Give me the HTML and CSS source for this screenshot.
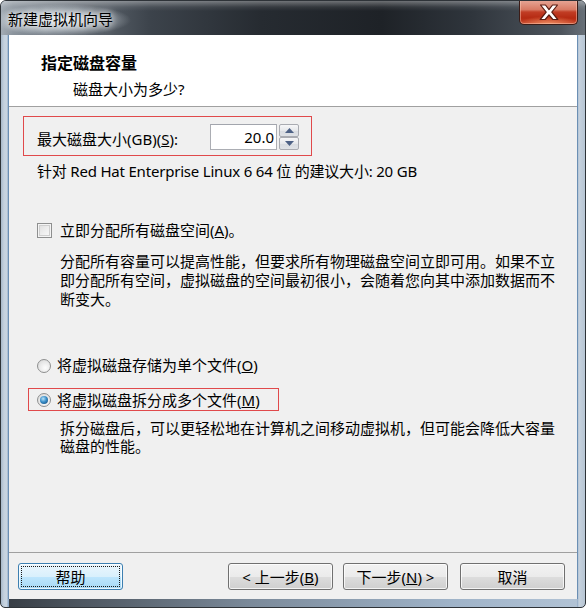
FILE: index.html
```html
<!DOCTYPE html>
<html lang="zh-CN">
<head>
<meta charset="utf-8">
<title>新建虚拟机向导</title>
<link rel="stylesheet" href="styles.css">
</head>
<body>
<div class="window">
  <div class="titlebar">
    <span class="title">新建虚拟机向导</span>
    <div class="close">
      <svg width="59" height="25" viewBox="0 0 59 25">
        <path d="M21.5 5 L26.5 5 L30 9.6 L33.5 5 L38.5 5 L32.8 12.2 L38.8 19.5 L33.8 19.5 L30 14.8 L26.2 19.5 L21.2 19.5 L27.2 12.2 Z" fill="#fff" stroke="#5a1d12" stroke-width="1.2" stroke-linejoin="round"/>
      </svg>
    </div>
  </div>
  <div class="client">
    <div class="header">
      <div class="h-title">指定磁盘容量</div>
      <div class="h-sub">磁盘大小为多少?</div>
    </div>
    <div class="content">
      <div class="size-box">
        <span class="label">最大磁盘大小(GB)(<u>S</u>):</span>
        <div class="spin">
          <div class="spin-input">20.0</div>
          <div class="spin-btns">
            <div class="spin-btn"><svg width="9" height="5" viewBox="0 0 9 5"><path d="M0 5 L4.5 0 L9 5 Z" fill="#4d6185"/></svg></div>
            <div class="spin-btn"><svg width="9" height="5" viewBox="0 0 9 5"><path d="M0 0 L4.5 5 L9 0 Z" fill="#4d6185"/></svg></div>
          </div>
        </div>
      </div>
      <div class="recommend">针对 Red Hat Enterprise Linux 6 64 位 的建议大小: 20 GB</div>
      <div class="check-row"><span class="checkbox"></span><span>立即分配所有磁盘空间(<u>A</u>)。</span></div>
      <p class="desc d1">分配所有容量可以提高性能，但要求所有物理磁盘空间立即可用。如果不立即分配所有空间，虚拟磁盘的空间最初很小，会随着您向其中添加数据而不断变大。</p>
      <div class="radio-row r1"><span class="radio"></span><span>将虚拟磁盘存储为单个文件(<u>O</u>)</span></div>
      <div class="radio-row r2"><span class="radio checked"></span><span>将虚拟磁盘拆分成多个文件(<u>M</u>)</span></div>
      <p class="desc d2">拆分磁盘后，可以更轻松地在计算机之间移动虚拟机，但可能会降低大容量磁盘的性能。</p>
    </div>
    <div class="footer">
      <button class="btn focus help"><span>帮助</span></button>
      <div class="nav">
        <button class="btn">&lt; 上一步(<u>B</u>)</button>
        <button class="btn next">下一步(<u>N</u>) &gt;</button>
        <button class="btn cancel">取消</button>
      </div>
    </div>
  </div>
</div>
</body>
</html>
```

FILE: styles.css
```css
html, body {
  margin: 0;
  padding: 0;
  background: #ffffff;
}

body {
  font-family: "Noto Sans", "Noto Sans CJK SC", sans-serif;
  font-size: 15px;
  color: #000;
}

.window {
  width: 586px;
  height: 608px;
  box-sizing: border-box;
  display: flex;
  flex-direction: column;
  border: 1px solid #2e3338;
  border-radius: 6px 6px 5px 5px;
  overflow: hidden;
  background:
    linear-gradient(to right, #a7b8c9 0, #c4d1de 3px, #c9d5e1 6px, #8ea8c4 7px) left top / 8px 100% no-repeat,
    linear-gradient(to right, #8ea8c4 0, #c6d2de 2px, #b9c7d5 7px) right top / 8px 100% no-repeat,
    linear-gradient(to right, #353b42 0, #4d5660 80px, #7b8a9a 250px, #9fb3c8 450px, #b3c4d6 586px);
}

.titlebar {
  height: 34px;
  position: relative;
  flex: none;
  background:
    linear-gradient(to bottom, rgba(255,255,255,0.35) 0, rgba(255,255,255,0.08) 6px, rgba(255,255,255,0) 10px),
    radial-gradient(ellipse 70px 16px at 60px 19px, rgba(235,240,244,0.85) 0, rgba(220,228,234,0.55) 55%, rgba(200,210,220,0) 100%),
    linear-gradient(to right, #a3acb5 0, #8a939c 12px, #6e767f 60px, #3c434b 150px, #262b31 260px, #1e2227 380px, #2f353c 470px, #4d545c 560px, #6a727a 586px);
}

.title {
  position: absolute;
  left: 7px;
  top: 8px;
  line-height: 20px;
  font-family: "Noto Sans CJK SC", sans-serif;
  font-size: 15px;
  color: #000;
  text-shadow: 0 0 6px rgba(255,255,255,0.9), 0 0 10px rgba(255,255,255,0.7);
}

.close {
  position: absolute;
  right: 7px;
  top: -1px;
  width: 59px;
  height: 25px;
  box-sizing: border-box;
  border: 1px solid #3b1c17;
  border-top: none;
  border-radius: 0 0 5px 5px;
  background:
    radial-gradient(ellipse 30px 8px at 50% 100%, rgba(255,170,120,0.7), rgba(255,140,90,0) 100%),
    linear-gradient(to bottom, #e7a898 0, #d77a64 40%, #c13d25 50%, #b52a12 75%, #c8462a 100%);
  box-shadow: inset 0 0 0 1px rgba(255,210,190,0.45);
}

.close svg {
  display: block;
  position: absolute;
  left: -1px;
  top: 0;
}

.client {
  flex: 1;
  margin: 0 7px 8px 7px;
  background: #f0f0f0;
  display: flex;
  flex-direction: column;
  border: 1px solid #6b8fb4;
  border-bottom: none;
  border-top: none;
  min-height: 0;
}

.header {
  height: 72px;
  box-sizing: border-box;
  background: #ffffff;
  border-bottom: 1px solid #a0a0a0;
  padding-top: 17px;
  flex: none;
}

.h-title {
  margin-left: 32px;
  line-height: 20px;
  font-family: "Noto Sans CJK SC", sans-serif;
  font-weight: 700;
  font-size: 16px;
}

.h-sub {
  margin-left: 64px;
  margin-top: 7px;
  line-height: 20px;
}

.content {
  flex: 1;
  padding-left: 14px;
}

.size-box {
  margin-top: 9px;
  width: 289px;
  height: 40px;
  box-sizing: border-box;
  border: 1px solid #e0494b;
  display: flex;
  align-items: center;
  justify-content: space-between;
  padding: 0 12px 0 13px;
}

.label {
  line-height: 20px;
  margin-top: 5px;
}

.spin {
  display: flex;
  gap: 2px;
  margin-top: 1px;
}

.spin-input {
  width: 67px;
  height: 26px;
  box-sizing: border-box;
  border: 1px solid #abadb3;
  border-top-color: #a2a5ad;
  background: #fff;
  text-align: right;
  line-height: 24px;
  padding-right: 2px;
  font-size: 15px;
}

.spin-btns {
  display: flex;
  flex-direction: column;
  width: 20px;
  height: 26px;
}

.spin-btn {
  flex: 1;
  box-sizing: border-box;
  border: 1px solid #a9abb1;
  border-radius: 2px;
  background: linear-gradient(to bottom, #f7f7f8 0, #e6e8eb 50%, #d8dbe0 51%, #dfe2e6 100%);
  display: flex;
  align-items: center;
  justify-content: center;
}

.spin-btn svg {
  display: block;
}

.recommend {
  margin-top: 5px;
  margin-left: 14px;
  line-height: 20px;
  letter-spacing: -0.2px;
}

.check-row {
  margin-top: 39px;
  margin-left: 14px;
  line-height: 20px;
  display: flex;
  align-items: center;
  gap: 8px;
}

.checkbox {
  width: 13px;
  height: 13px;
  border: 1px solid #8e8f8f;
  background: linear-gradient(135deg, #dcdcdc 0, #f0f0f0 60%, #fafafa 100%);
  box-shadow: inset 0 0 0 1px #f4f4f4, inset 0 0 0 2px #cfcfcf;
  flex: none;
  margin-top: 1px;
}

.desc {
  margin: 0;
  margin-left: 37px;
  width: 500px;
}

.d1 {
  margin-top: 12px;
  line-height: 19px;
}

.radio-row {
  display: flex;
  align-items: center;
  gap: 6px;
  line-height: 20px;
}

.r1 {
  margin-top: 46px;
  margin-left: 14px;
}

.r2 {
  margin-top: 13px;
  margin-left: 5px;
  width: 251px;
  box-sizing: border-box;
  height: 23px;
  border: 1px solid #e0494b;
  padding-left: 8px;
}

.radio {
  width: 14px;
  height: 14px;
  box-sizing: border-box;
  border-radius: 50%;
  border: 1px solid #8e8f8f;
  background: radial-gradient(circle at 60% 65%, #fdfdfd 0, #eaeaea 50%, #d3d3d3 100%);
  flex: none;
  position: relative;
  margin-top: 1px;
}

.radio.checked::after {
  content: "";
  position: absolute;
  left: 2px;
  top: 2px;
  width: 8px;
  height: 8px;
  border-radius: 50%;
  background: radial-gradient(circle at 40% 35%, #b9e3f9 0, #3a8fc9 45%, #0d3f6e 100%);
}

.d2 {
  margin-top: 8px;
  line-height: 18px;
}

.footer {
  flex: none;
  border-top: 1px solid #a0a0a0;
  padding: 10px 12px 9px 9px;
  display: flex;
  justify-content: space-between;
}

.nav {
  display: flex;
  gap: 10px;
}

.btn {
  width: 105px;
  height: 27px;
  box-sizing: border-box;
  border: 1px solid #707070;
  border-radius: 3px;
  background: linear-gradient(to bottom, #f2f2f2 0, #ebebeb 50%, #dddddd 51%, #cfcfcf 100%);
  box-shadow: inset 0 0 0 1px rgba(255,255,255,0.75);
  font-family: "Noto Sans", "Noto Sans CJK SC", sans-serif;
  font-size: 15px;
  line-height: 20px;
  color: #000;
  padding: 0;
  position: relative;
}

.cancel {
  margin-left: 2px;
}

.btn.focus {
  border-color: #3c7fb1;
  background: linear-gradient(to bottom, #eaf6fd 0, #d9f0fc 50%, #bee6fd 51%, #a7d9f5 100%);
}

.btn.focus::after {
  content: "";
  position: absolute;
  left: 2px;
  top: 2px;
  right: 2px;
  bottom: 2px;
  border: 1px dotted #1a1a1a;
}
```
